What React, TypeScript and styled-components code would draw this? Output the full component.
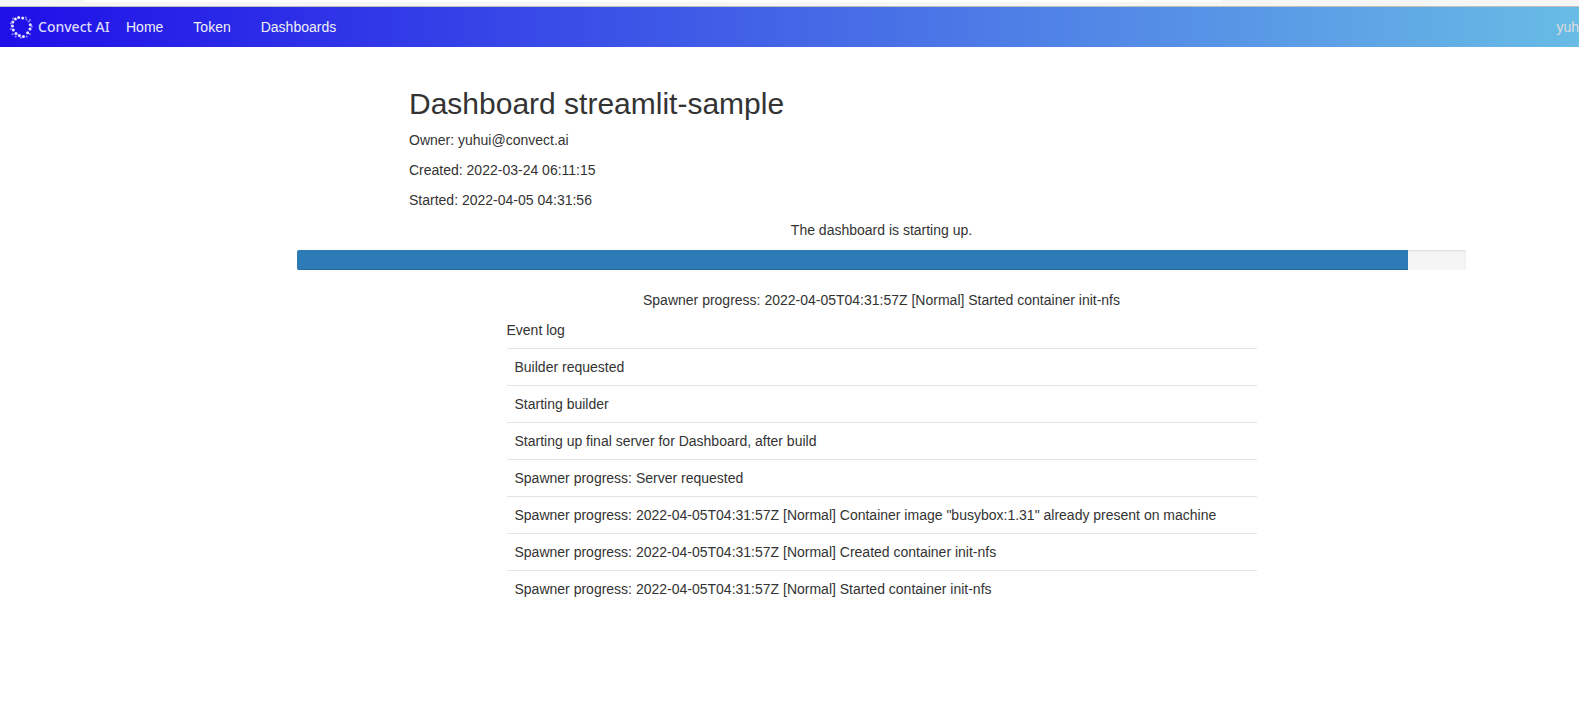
import React from "react";
import styled, { createGlobalStyle } from "styled-components";

const GlobalStyle = createGlobalStyle`
  *, *::before, *::after { box-sizing: border-box; }
  body {
    margin: 0;
    background: #fff;
    color: #333;
    font: 14px/20px "Liberation Sans", Arial, sans-serif;
    overflow-x: hidden;
  }
`;

const BrowserEdge = styled.div`
  height: 7px;
  padding: 0 357px 0 85px;
  background: #f6f6f6;
  border-bottom: 1px solid #bfc0bb;
`;

const AddressBar = styled.div`
  height: 2px;
  background: #fff;
  border-radius: 0 0 4px 4px;
`;

const Navbar = styled.nav`
  display: flex;
  align-items: center;
  height: 40px;
  background: linear-gradient(to right, #1f0fe8, #68bce5);
`;

const Brand = styled.a`
  display: flex;
  align-items: center;
  gap: 4px;
  width: 111px;
  padding-left: 8px;
  color: #dcdafa;
  font: 500 14px/20px "Noto Sans", "Open Sans", sans-serif;
  white-space: nowrap;
  text-decoration: none;
`;

const NavList = styled.ul`
  display: flex;
  flex: 1;
  margin: 0;
  padding: 0;
  list-style: none;
`;

const NavLink = styled.a`
  display: block;
  padding: 10px 15px;
  color: #f0f0f5;
  text-decoration: none;
`;

const UserName = styled.span`
  color: #ddd;
`;

const Page = styled.main`
  padding: 40px 113px 40px 297px;
`;

const Details = styled.header`
  padding: 0 112px;
`;

const Title = styled.h1`
  margin: 0 0 10px;
  font-size: 30px;
  font-weight: 400;
  line-height: 33px;
`;

const Line = styled.p<{ $center?: boolean }>`
  margin: 0 0 10px;
  text-align: ${(p) => (p.$center ? "center" : "left")};
`;

const Track = styled.div`
  height: 20px;
  margin-bottom: 20px;
  overflow: hidden;
  background: #f5f5f5;
  border-radius: 2px;
  box-shadow: inset 0 1px 2px rgba(0, 0, 0, 0.1);
`;

const Fill = styled.div`
  height: 100%;
  background: #2c7bb6;
  box-shadow: inset 0 -1px 0 rgba(0, 0, 0, 0.15);
`;

const EventLog = styled.section`
  max-width: 750px;
  margin: 0 auto;
`;

const LogTable = styled.table`
  width: 100%;
  border-spacing: 0;
  border-collapse: collapse;

  caption {
    padding-bottom: 8px;
    text-align: left;
  }

  td {
    padding: 8px;
    border-top: 1px solid #e4e4e4;
  }
`;

const largeDots = [
  [10.7, 3.4], [14.7, 4], [22.3, 10.7], [22, 15], [19.6, 18.7], [15.4, 22.4],
  [11.3, 21.6], [8, 19.4], [5.3, 16], [4.4, 12], [4.8, 8], [7.4, 5],
];

const smallDots = [
  [18.4, 5.6], [20.6, 7.6], [17.8, 3.4], [22, 6], [23.8, 12.8], [21.8, 20],
  [18.6, 22.4], [12.8, 23.8], [7.6, 22.6], [4.6, 20.2], [2.8, 15], [2.8, 9.4], [5, 4.6],
];

const Logo = () => (
  <svg width="26" height="26" viewBox="0 0 26 26" fill="#fff" aria-hidden="true">
    {largeDots.map(([x, y]) => (
      <circle key={`${x},${y}`} cx={x} cy={y} r="1.5" opacity="0.9" />
    ))}
    {smallDots.map(([x, y]) => (
      <circle key={`${x},${y}`} cx={x} cy={y} r="1" opacity="0.5" />
    ))}
  </svg>
);

const links = ["Home", "Token", "Dashboards"];

const events = [
  "Builder requested",
  "Starting builder",
  "Starting up final server for Dashboard, after build",
  "Spawner progress: Server requested",
  'Spawner progress: 2022-04-05T04:31:57Z [Normal] Container image "busybox:1.31" already present on machine',
  "Spawner progress: 2022-04-05T04:31:57Z [Normal] Created container init-nfs",
  "Spawner progress: 2022-04-05T04:31:57Z [Normal] Started container init-nfs",
];

const progress = 95;

export default function App() {
  return (
    <>
      <GlobalStyle />
      <BrowserEdge>
        <AddressBar />
      </BrowserEdge>
      <Navbar>
        <Brand href="#">
          <Logo />
          Convect AI
        </Brand>
        <NavList>
          {links.map((link) => (
            <li key={link}>
              <NavLink href="#">{link}</NavLink>
            </li>
          ))}
        </NavList>
        <UserName>yuh</UserName>
      </Navbar>
      <Page>
        <Details>
          <Title>Dashboard streamlit-sample</Title>
          <Line>Owner: yuhui@convect.ai</Line>
          <Line>Created: 2022-03-24 06:11:15</Line>
          <Line>Started: 2022-04-05 04:31:56</Line>
        </Details>
        <Line $center>The dashboard is starting up.</Line>
        <Track
          role="progressbar"
          aria-label="Startup progress"
          aria-valuemin={0}
          aria-valuemax={100}
          aria-valuenow={progress}
        >
          <Fill style={{ width: `${progress}%` }} />
        </Track>
        <Line $center>{events[events.length - 1]}</Line>
        <EventLog>
          <LogTable>
            <caption>Event log</caption>
            <tbody>
              {events.map((event) => (
                <tr key={event}>
                  <td>{event}</td>
                </tr>
              ))}
            </tbody>
          </LogTable>
        </EventLog>
      </Page>
    </>
  );
}
